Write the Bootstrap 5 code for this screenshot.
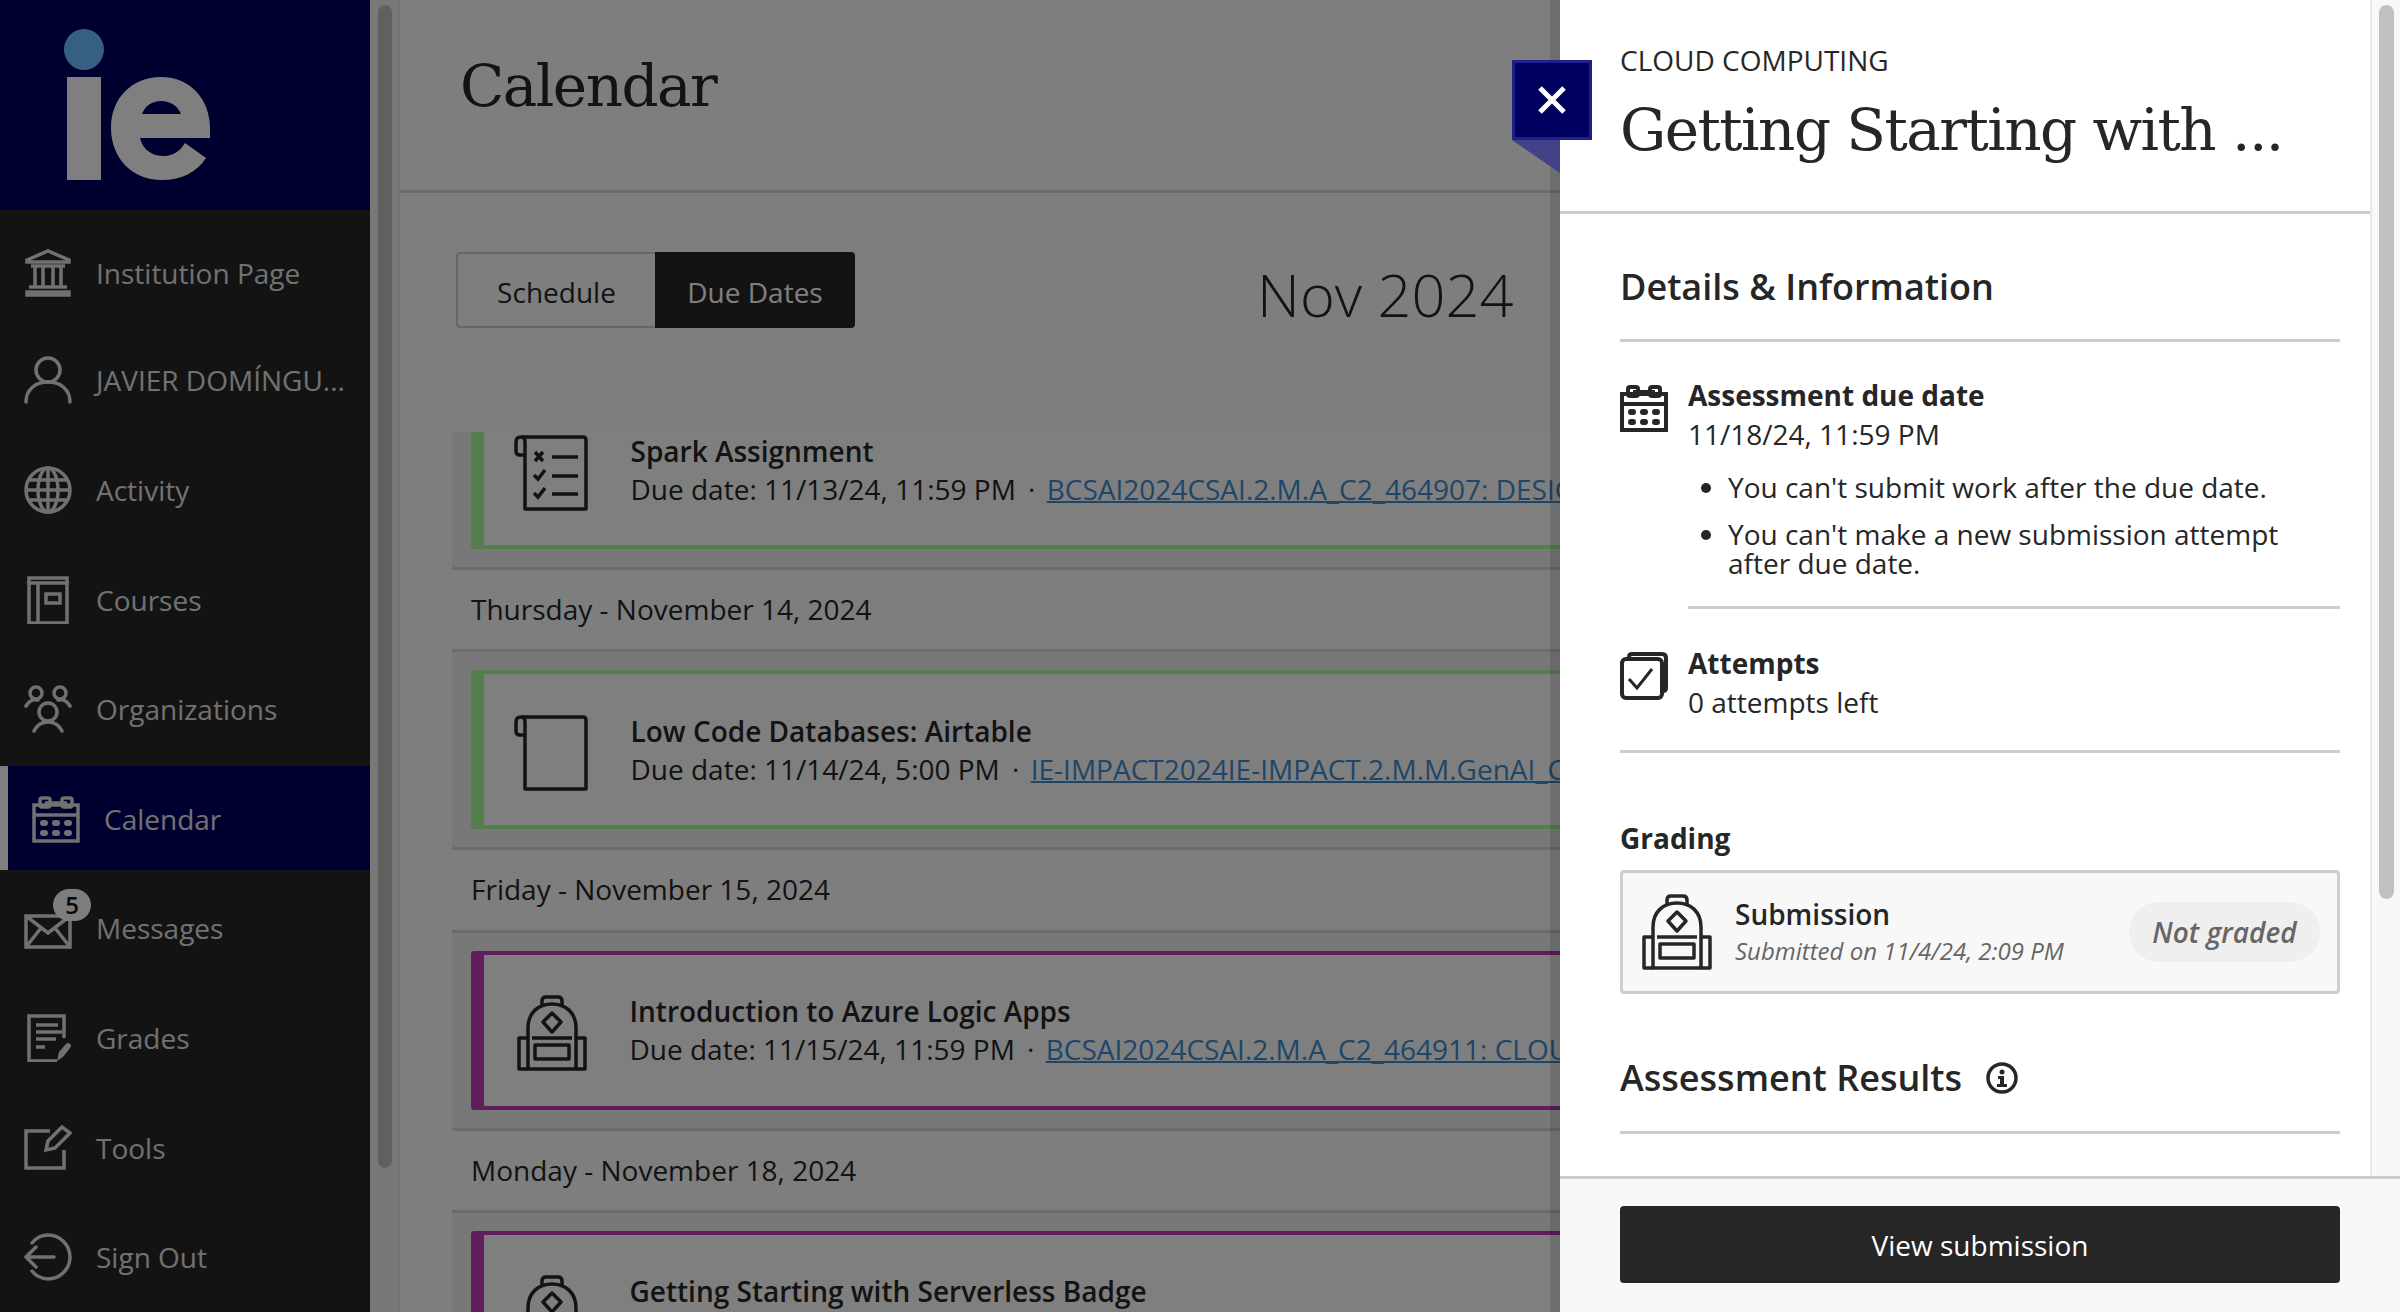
<!DOCTYPE html>
<html lang="en">
<head>
    <meta charset="UTF-8">
    <meta name="viewport" content="width=device-width, initial-scale=1.0">
    <title>Calendar</title>
    <link href="https://cdn.jsdelivr.net/npm/bootstrap@5.3.0/dist/css/bootstrap.min.css" rel="stylesheet">
    <style>
        html, body { height: 100%; overflow: hidden; }
        body { font-family: "Open Sans", "Liberation Sans", sans-serif; font-size: 28px; color: #262626; background: #fcfcfc; }
        .app-shell { height: 1312px; }

        .side-col { width: 370px; background: #262626; color: #e2e2e2; }
        .side-logo { height: 210px; background: #000060; }
        .side-logo svg { display: block; }
        .side-nav { padding-top: 8px; gap: 6px; }
        .side-item { height: 103.6px; padding: 2px 0 0 24px; gap: 24px; color: #e2e2e2; text-decoration: none; position: relative; white-space: nowrap; }
        .side-item:first-child { padding-top: 6px; }
        .side-item svg { width: 48px; height: 48px; flex: none; }
        .side-item.is-active { background: #000060; border-left: 8px solid #fff; }
        .msg-count { position: absolute; left: 53px; top: 13px; width: 38px; height: 32px; border-radius: 16px; background: #fafafa; color: #111; font-size: 24px; font-weight: 600; line-height: 32px; text-align: center; }

        .bar-track { width: 30px; flex: none; background: #f0f0f0; border-right: 1px solid #e2e2e2; padding: 5px 7px 0 8px; }
        .bar-thumb { background: #c1c1c1; border-radius: 8px; height: 1163px; }

        .main-col { min-width: 0; }
        .page-head { height: 193px; padding: 46px 0 0 60px; border-bottom: 3px solid #d9d9d9; }
        .serif-title { font-family: "DejaVu Serif", "Liberation Serif", serif; font-weight: 400; font-size: 58px; line-height: 80px; letter-spacing: -1.55px; margin: 0; color: #262626; }
        .tool-row { height: 239px; padding: 59px 0 0 56px; }
        .view-btn { height: 76px; width: 199px; border: 2px solid #cdcdcd; border-right: 0; border-radius: 4px 0 0 4px; background: transparent; font-size: 28px; color: #262626; padding-top: 4px; }
        .view-btn.is-on { width: 200px; border: 0; border-radius: 0 4px 4px 0; background: #262626; color: #fff; }
        .month-label { margin-left: 402px; font-size: 59.5px; font-weight: 300; line-height: 76px; margin-top: 4px; white-space: nowrap; }

        .due-list { margin-left: 52px; overflow: hidden; flex: 1 1 0; min-height: 0; }
        .due-section { background: #f0f0f0; padding: 18px 0; border-bottom: 3px solid #d9d9d9; }
        .due-section.is-scrolled { margin-top: -60px; }
        .due-item { height: 159px; margin-left: 18.5px; background: #fff; border: 4px solid #a4ff94; border-left-width: 13.5px; border-right: 0; border-radius: 4px 0 0 4px; padding-left: 30px; gap: 43px; white-space: nowrap; }
        .due-item.is-course { border-color: #c038b8; }
        .due-item svg { flex: none; margin-top: 6px; }
        .due-item.is-course svg { margin-left: 2px; margin-right: -1px; }
        .due-name { font-weight: 600; line-height: 38px; }
        .due-line { line-height: 38px; }
        .due-line a { color: #3c8cd2; text-decoration-thickness: 2px; }
        .due-line i { font-style: normal; margin: 0 4px 0 5px; }
        .due-day { height: 82.3px; line-height: 79px; padding-left: 19px; border-bottom: 3px solid #d9d9d9; }

        .page-dim { position: absolute; left: 0; top: 0; width: 1560px; height: 1312px; background: rgba(0, 0, 0, .5); }

        .side-panel { position: absolute; right: 0; top: 0; width: 840px; height: 1312px; background: #fff; box-shadow: -10px 0 0 rgba(0, 0, 0, .12); }
        .panel-scroll { min-height: 0; overflow: hidden; }
        .panel-bar { width: 30px; flex: none; background: #f8f8f8; border-left: 2px solid #e9e9e9; padding: 5px 6px 0 7px; }
        .panel-thumb { background: #c1c1c1; border-radius: 8px; height: 894px; }
        .panel-head { padding: 42px 0 0 60px; border-bottom: 3px solid #cdcdcd; box-sizing: content-box; height: 169px; }
        .panel-course { line-height: 36px; }
        .panel-title { margin-top: 12px !important; }
        .panel-body { padding: 0 30px 0 60px; }
        .panel-h { font-size: 36px; font-weight: 600; line-height: 44px; margin: 0; padding: 51px 0 30px; border-bottom: 3px solid #cdcdcd; }
        .panel-h.is-results { padding: 62px 0 31px; }
        .info-row { gap: 20px; }
        .info-row svg { flex: none; margin-top: 8px; }
        .due-row { padding-top: 34px; }
        .info-name { font-weight: 700; line-height: 39px; }
        .info-val { line-height: 39px; }
        .rule-list { margin: 19px 0 0; padding: 0 0 28px 40px; line-height: 29px; border-bottom: 3px solid #cdcdcd; }
        .rule-list li + li { margin-top: 18px; }
        .attempts-row { padding: 35px 0 28px; border-bottom: 3px solid #cdcdcd; }
        .grade-label { font-weight: 700; line-height: 38px; margin-top: 66px; }
        .grade-box { height: 124px; margin-top: 13px; background: #f8f8f8; border: 3px solid #cdcdcd; border-radius: 4px; padding: 0 17px 0 18px; }
        .grade-text { margin-left: 22px; }
        .grade-sub { font-size: 24px; font-style: italic; color: #666; line-height: 36px; }
        .grade-name { font-weight: 600; line-height: 38px; }
        .grade-pill { background: #efefef; color: #666; border-radius: 30px; height: 60px; width: 191px; line-height: 60px; text-align: center; font-style: italic; font-weight: 600; }
        .panel-foot { height: 136px; flex: none; background: #f8f8f8; border-top: 3px solid #cdcdcd; padding: 27px 60px 0; }
        .view-sub { height: 77px; background: #262626; color: #fff; font-size: 28px; border-radius: 4px; border: 0; }

        .close-tab { position: absolute; left: 1512px; top: 60px; width: 80px; height: 80px; background: #000060; border: 3px solid #20208c; padding: 0; }
        .close-fold { position: absolute; left: 1512px; top: 140px; width: 48px; height: 33px; background: #424288; clip-path: polygon(0 0, 100% 0, 100% 100%); }
    </style>
</head>
<body>
    <svg width="0" height="0" class="position-absolute">
        <symbol id="ico-cal" viewBox="0 0 48 48">
            <g fill="none" stroke="currentColor">
                <path d="M2 10h44v36H2zM2 20h44"/>
                <path d="M13 8H35"/>
                <rect x="8" y="3" width="10" height="9" rx="2"/>
                <rect x="30" y="3" width="10" height="9" rx="2"/>
            </g>
            <g fill="currentColor"><rect x="8" y="25" width="8" height="6" rx="3"/><rect x="20" y="25" width="8" height="6" rx="3"/><rect x="32" y="25" width="8" height="6" rx="3"/><rect x="8" y="35" width="8" height="6" rx="3"/><rect x="20" y="35" width="8" height="6" rx="3"/><rect x="32" y="35" width="8" height="6" rx="3"/></g>
        </symbol>
        <symbol id="ico-pack" viewBox="0 0 72 76">
            <g fill="none" stroke="currentColor" stroke-width="3.5" stroke-linejoin="round">
                <path d="M12 74V33C12 18 22 9 36 9s24 9 24 24v41z"/>
                <path d="M26 10V6q0-4 4-4h12q4 0 4 4v4"/>
                <path d="M36 18l9 9-9 10-9-10z"/>
                <path d="M16 43h40M19 50h34v14H19z"/>
                <path d="M12 43H3v31h9M60 43h9v31h-9"/>
            </g>
        </symbol>
        <symbol id="ico-scroll" viewBox="0 0 74 76">
            <path d="M11 20H6q-4 0-4-4V7q0-5 5-5h62q3 0 3 3v69H11z" fill="none" stroke="currentColor" stroke-width="3.5" stroke-linejoin="round"/>
            <path d="M11 20V7q0-5-4-5" fill="none" stroke="currentColor" stroke-width="3.5"/>
        </symbol>
    </svg>

    <div class="app-shell d-flex position-relative overflow-hidden">
        <nav class="side-col d-flex flex-column flex-shrink-0">
            <div class="side-logo">
                <svg width="370" height="210" viewBox="0 0 370 210">
                    <ellipse cx="84" cy="49.5" rx="20" ry="20.5" fill="#6ebeff"/>
                    <rect x="67" y="77" width="34" height="103" fill="#fff"/>
                    <path fill="#fff" fill-rule="evenodd" d="M210 138H140C143 150 152 156 164 156C173 156 180 151 185 143L206 158C197 172 182 180 162 180C131 180 111 157 111 128C111 99 131 77 161 77C191 77 210 100 210 128ZM142 114C145 106 152 101 161 101C170 101 178 106 181 114Z"/>
                </svg>
            </div>
            <div class="side-nav d-flex flex-column">
                <a class="side-item d-flex align-items-center" href="#">
                    <svg viewBox="0 0 48 48" fill="none" stroke="currentColor" stroke-width="3.5"><path d="M3 11L24 2l21 9v2H3zM7 17h34M5 38h38M3 43h42v3H3zM11 17v21M19 17v21M29 17v21M37 17v21"/></svg>
                    Institution Page
                </a>
                <a class="side-item d-flex align-items-center" href="#">
                    <svg viewBox="0 0 48 48" fill="none" stroke="currentColor" stroke-width="3.5" stroke-linecap="round"><circle cx="24" cy="14" r="12"/><path d="M2 46c0-12 9-20 22-20s22 8 22 20"/></svg>
                    JAVIER DOMÍNGU...
                </a>
                <a class="side-item d-flex align-items-center" href="#">
                    <svg viewBox="0 0 48 48" fill="none" stroke="currentColor" stroke-width="3.5"><circle cx="24" cy="24" r="22"/><ellipse cx="24" cy="24" rx="10" ry="22"/><path d="M24 2v44M2 24h44M5 14h38M5 34h38"/></svg>
                    Activity
                </a>
                <a class="side-item d-flex align-items-center" href="#">
                    <svg viewBox="0 0 48 48" fill="none" stroke="currentColor" stroke-width="3.5"><path d="M5 2h38v45H5zM3 7h42M14 7v40M22 18h14v9H22z"/></svg>
                    Courses
                </a>
                <a class="side-item d-flex align-items-center" href="#">
                    <svg viewBox="0 0 48 48" fill="none" stroke="currentColor" stroke-width="3.5" stroke-linecap="round"><circle cx="12" cy="8" r="6"/><circle cx="36" cy="8" r="6"/><circle cx="24" cy="27" r="9"/><path d="M2 21c3-5 7-7 12-6M46 21c-3-5-7-7-12-6M10 46c3-6 8-9 14-9s11 3 14 9"/></svg>
                    Organizations
                </a>
                <a class="side-item is-active d-flex align-items-center" href="#">
                    <svg stroke-width="3.5"><use href="#ico-cal"/></svg>
                    Calendar
                </a>
                <a class="side-item d-flex align-items-center" href="#">
                    <svg viewBox="0 0 48 48" fill="none" stroke="currentColor" stroke-width="3.5"><path d="M2 12h44v31H2zM2 12l22 17 22-17M2 43l15-19M46 43L31 24"/></svg>
                    Messages
                    <span class="msg-count">5</span>
                </a>
                <a class="side-item d-flex align-items-center" href="#">
                    <svg viewBox="0 0 48 48" fill="none" stroke="currentColor" stroke-width="3.5"><path d="M40 24V2H5v45h28M12 11h22M12 18h26M12 25h20M12 33h9"/><path d="M33 47l2-9 7-8q2-2 4 0t0 4l-7 9z" fill="currentColor" stroke="none"/></svg>
                    Grades
                </a>
                <a class="side-item d-flex align-items-center" href="#">
                    <svg viewBox="0 0 48 48" fill="none" stroke="currentColor" stroke-width="3.5"><path d="M26 7H2v37h38V26"/><path d="M22 26l2-9L38 3l8 6-15 15z"/></svg>
                    Tools
                </a>
                <a class="side-item d-flex align-items-center" href="#">
                    <svg viewBox="0 0 48 48" fill="none" stroke="currentColor" stroke-width="3.5" stroke-linecap="round" stroke-linejoin="round"><path d="M8 10C12 5 18 2 24 2c12 0 22 10 22 22S36 46 24 46c-6 0-12-3-16-8M30 24H2M12 14L2 24l10 10"/></svg>
                    Sign Out
                </a>
            </div>
        </nav>
        <div class="bar-track"><div class="bar-thumb"></div></div>

        <main class="main-col flex-grow-1 d-flex flex-column">
            <div class="page-head"><h1 class="serif-title">Calendar</h1></div>
            <div class="tool-row d-flex align-items-start flex-shrink-0">
                <button class="view-btn">Schedule</button>
                <button class="view-btn is-on">Due Dates</button>
                <div class="month-label">Nov 2024</div>
            </div>
            <div class="due-list">
                <div class="due-section is-scrolled">
                    <div class="due-item d-flex align-items-center">
                        <svg width="74" height="76" viewBox="0 0 74 76" color="#262626">
                            <use href="#ico-scroll"/>
                            <path d="M21 17l8 9m0-9l-8 9" stroke="currentColor" stroke-width="3.5" fill="none"/>
                            <path d="M20 40l4 4 7-9M20 58l4 4 7-9" stroke="currentColor" stroke-width="3.5" fill="none"/>
                            <path d="M38 22h26M38 41h26M38 59h26" stroke="currentColor" stroke-width="3.5" fill="none"/>
                        </svg>
                        <div>
                            <div class="due-name">Spark Assignment</div>
                            <div class="due-line">Due date: 11/13/24, 11:59 PM <i>·</i> <a href="#">BCSAI2024CSAI.2.M.A_C2_464907: DESIGN THINKING</a></div>
                        </div>
                    </div>
                </div>
                <div class="due-day">Thursday - November 14, 2024</div>
                <div class="due-section">
                    <div class="due-item d-flex align-items-center">
                        <svg width="74" height="76" viewBox="0 0 74 76" color="#262626"><use href="#ico-scroll"/></svg>
                        <div>
                            <div class="due-name">Low Code Databases: Airtable</div>
                            <div class="due-line">Due date: 11/14/24, 5:00 PM <i>·</i> <a href="#">IE-IMPACT2024IE-IMPACT.2.M.M.GenAI_C2_464920</a></div>
                        </div>
                    </div>
                </div>
                <div class="due-day">Friday - November 15, 2024</div>
                <div class="due-section">
                    <div class="due-item is-course d-flex align-items-center">
                        <svg width="72" height="76" color="#262626"><use href="#ico-pack"/></svg>
                        <div>
                            <div class="due-name">Introduction to Azure Logic Apps</div>
                            <div class="due-line">Due date: 11/15/24, 11:59 PM <i>·</i> <a href="#">BCSAI2024CSAI.2.M.A_C2_464911: CLOUD COMPUTING</a></div>
                        </div>
                    </div>
                </div>
                <div class="due-day">Monday - November 18, 2024</div>
                <div class="due-section">
                    <div class="due-item is-course d-flex align-items-center">
                        <svg width="72" height="76" color="#262626"><use href="#ico-pack"/></svg>
                        <div>
                            <div class="due-name">Getting Starting with Serverless Badge</div>
                            <div class="due-line">Due date: 11/18/24, 11:59 PM <i>·</i> <a href="#">BCSAI2024CSAI.2.M.A_C2_464911: CLOUD COMPUTING</a></div>
                        </div>
                    </div>
                </div>
            </div>
        </main>

        <div class="page-dim"></div>

        <aside class="side-panel d-flex flex-column">
            <div class="panel-scroll d-flex flex-grow-1">
                <div class="flex-grow-1">
                    <div class="panel-head">
                        <div class="panel-course">CLOUD COMPUTING</div>
                        <h2 class="serif-title panel-title">Getting Starting with ...</h2>
                    </div>
                    <div class="panel-body">
                        <h3 class="panel-h">Details &amp; Information</h3>
                        <div class="info-row due-row d-flex">
                            <svg width="48" height="48" color="#262626" stroke-width="4"><use href="#ico-cal"/></svg>
                            <div class="flex-grow-1">
                                <div class="info-name">Assessment due date</div>
                                <div class="info-val">11/18/24, 11:59 PM</div>
                                <ul class="rule-list">
                                    <li>You can't submit work after the due date.</li>
                                    <li>You can't make a new submission attempt after due date.</li>
                                </ul>
                            </div>
                        </div>
                        <div class="info-row attempts-row d-flex">
                            <svg width="48" height="48" viewBox="0 0 48 48" fill="none" stroke="#262626" stroke-width="4"><path d="M9 5q0-3 3-3h30q4 0 4 4v30q0 3-3 3"/><rect x="2" y="7" width="40" height="39" rx="4"/><path d="M9 27l8 9 15-19" stroke-width="3"/></svg>
                            <div>
                                <div class="info-name">Attempts</div>
                                <div class="info-val">0 attempts left</div>
                            </div>
                        </div>
                        <div class="grade-label">Grading</div>
                        <div class="grade-box d-flex align-items-center">
                            <svg width="72" height="76" color="#262626"><use href="#ico-pack"/></svg>
                            <div class="grade-text flex-grow-1">
                                <div class="grade-name">Submission</div>
                                <div class="grade-sub">Submitted on 11/4/24, 2:09 PM</div>
                            </div>
                            <div class="grade-pill">Not graded</div>
                        </div>
                        <h3 class="panel-h is-results d-flex align-items-center gap-3">
                            Assessment Results
                            <svg width="32" height="32" viewBox="0 0 32 32" class="ms-2"><circle cx="16" cy="16" r="14" fill="none" stroke="#262626" stroke-width="3.5"/><circle cx="16" cy="10" r="2.5" fill="#262626"/><path d="M12 14h6v8h3v3H11v-3h3v-5h-2z" fill="#262626"/></svg>
                        </h3>
                    </div>
                </div>
                <div class="panel-bar"><div class="panel-thumb"></div></div>
            </div>
            <div class="panel-foot">
                <button class="view-sub w-100">View submission</button>
            </div>
        </aside>

        <div class="close-fold"></div>
        <button class="close-tab d-flex align-items-center justify-content-center" aria-label="Close">
            <svg width="30" height="30" viewBox="0 0 30 30"><path d="M3 3l24 24M27 3L3 27" stroke="#fff" stroke-width="5" fill="none"/></svg>
        </button>
    </div>
</body>
</html>
